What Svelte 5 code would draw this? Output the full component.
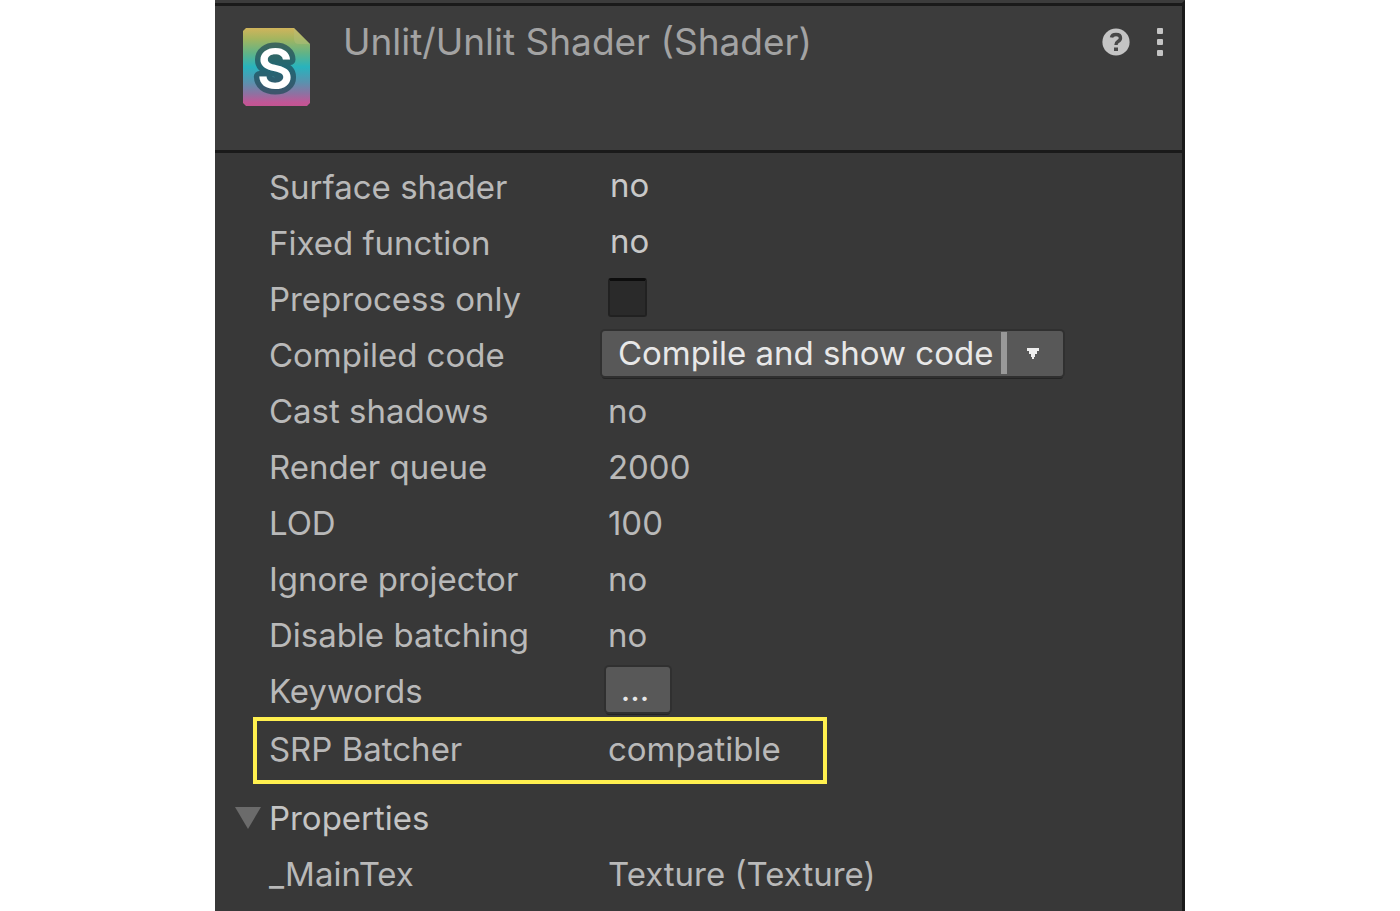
<script>
  let expanded = $state(true);
  let preprocessOnly = $state(false);

  const flags = [
    { label: 'Surface shader', value: 'no', field: true },
    { label: 'Fixed function', value: 'no', field: true },
    { label: 'Preprocess only', kind: 'toggle' },
    { label: 'Compiled code', kind: 'compile' },
    { label: 'Cast shadows', value: 'no' },
    { label: 'Render queue', value: '2000' },
    { label: 'LOD', value: '100' },
    { label: 'Ignore projector', value: 'no' },
    { label: 'Disable batching', value: 'no' },
    { label: 'Keywords', kind: 'keywords' }
  ];
</script>

<main class="inspector">
  <header>
    <svg class="asset" viewBox="0 0 67 78" aria-hidden="true">
      <defs>
        <linearGradient id="sheet" x1="0" y1="0" x2="0" y2="1">
          <stop offset="0" stop-color="#d0b45c" />
          <stop offset="0.14" stop-color="#a3b55f" />
          <stop offset="0.32" stop-color="#62b386" />
          <stop offset="0.5" stop-color="#28b3bd" />
          <stop offset="0.7" stop-color="#5b91ae" />
          <stop offset="0.84" stop-color="#8d72a2" />
          <stop offset="0.95" stop-color="#c05797" />
          <stop offset="1" stop-color="#c45491" />
        </linearGradient>
      </defs>
      <path d="M3 0H51L67 16V75L64 78H3L0 75V3Z" fill="url(#sheet)" />
      <path d="M51 0L67 16H56Q51 16 51 11Z" fill="#b9c17c" opacity="0.4" />
      <text class="letter" x="32" y="61" text-anchor="middle">S</text>
    </svg>
    <h1>Unlit/Unlit Shader (Shader)</h1>
    <button class="icon" aria-label="Help">
      <svg width="28" height="28" viewBox="0 0 28 28">
        <circle cx="14" cy="14" r="13.6" fill="#c4c4c4" />
        <path d="M9.5 9.5Q10 6.5 14 6.5Q18.5 6.5 18.5 10Q18.5 12 16 13.5Q14 14.7 14 17" fill="none" stroke="#484848" stroke-width="3.4" />
        <rect x="12" y="19.5" width="4" height="3.5" fill="#484848" />
      </svg>
    </button>
    <button class="icon" aria-label="More options">
      <svg width="12" height="28" viewBox="0 0 12 28" fill="#c4c4c4">
        <rect x="3" y="0" width="6" height="6" rx="1" />
        <rect x="3" y="11" width="6" height="6" rx="1" />
        <rect x="3" y="22" width="6" height="6" rx="1" />
      </svg>
    </button>
  </header>

  <section class="body">
    {#each flags as row}
      <div class="row">
        {#if row.kind === 'toggle'}
          <label for="preprocess">{row.label}</label>
          <input id="preprocess" type="checkbox" bind:checked={preprocessOnly} />
        {:else if row.kind === 'compile'}
          <span>{row.label}</span>
          <div class="split">
            <button class="action">Compile and show code</button>
            <button class="arrow" aria-label="Compile options">
              <svg width="12" height="11" viewBox="0 0 12 11"><path d="M0 0H12V3H10V6H8V9H7V11H5V9H4V6H2V3H0Z" fill="#eee" /></svg>
            </button>
          </div>
        {:else if row.kind === 'keywords'}
          <span>{row.label}</span>
          <button class="more">...</button>
        {:else}
          <span>{row.label}</span>
          <span class:field={row.field}>{row.value}</span>
        {/if}
      </div>
    {/each}

    <div class="row highlight">
      <span>SRP Batcher</span>
      <span>compatible</span>
    </div>

    <button class="foldout" aria-expanded={expanded} onclick={() => (expanded = !expanded)}>
      <svg class:closed={!expanded} width="26" height="22" viewBox="0 0 26 22"><path d="M0 0H26L13 22Z" fill="#6b6b6b" /></svg>
      <span>Properties</span>
    </button>
    {#if expanded}
      <div class="row">
        <span>_MainTex</span>
        <span>Texture (Texture)</span>
      </div>
    {/if}
  </section>
</main>

<style>
  :global(body) {
    margin: 0;
    background: #fff;
  }
  .inspector {
    box-sizing: border-box;
    width: 69.3%;
    min-height: 100vh;
    margin: 0 auto;
    background: #383838;
    border-right: 3px solid #1a1a1a;
    border-top: 3px solid #3c3c3c;
    color: #b9b9b9;
    font: 400 33px/40px Inter, sans-serif;
    white-space: nowrap;
  }
  button {
    padding: 0;
    border: 0;
    background: none;
    color: inherit;
    font: inherit;
    text-align: left;
  }
  svg {
    display: block;
  }
  header {
    display: flex;
    align-items: flex-start;
    box-sizing: border-box;
    height: 150px;
    padding: 22px 16px 0 28px;
    background: #3c3c3c;
    border: solid #1a1a1a;
    border-width: 3px 0;
  }
  .asset {
    width: 67px;
    height: 78px;
    margin-right: 33px;
  }
  .letter {
    font: 600 56px Inter, sans-serif;
    fill: #fff;
    stroke: rgba(32, 74, 88, 0.72);
    stroke-width: 11px;
    stroke-linejoin: round;
    paint-order: stroke;
  }
  h1 {
    flex: 1;
    margin: -6px 0 0;
    color: #a3a3a3;
    font: 400 37px/40px Inter, sans-serif;
  }
  .icon + .icon {
    margin-left: 24px;
  }
  .body {
    padding-top: 6px;
  }
  .row {
    display: grid;
    grid-template-columns: 339px 1fr;
    align-items: center;
    height: 56px;
    padding-left: 54px;
  }
  .field {
    padding: 0 0 4px 2px;
    color: #c8c8c8;
  }
  input {
    appearance: none;
    box-sizing: border-box;
    width: 39px;
    height: 39px;
    margin: 0 0 4px;
    background: #2a2a2a;
    border: 2px solid #212121;
    border-top: 3px solid #0d0d0d;
    border-radius: 3px;
  }
  input:checked {
    background: #c4c4c4;
  }
  .split,
  .more {
    height: 45px;
    margin: 0 0 4px -6px;
    background: #585858;
    border-radius: 3px;
    box-shadow: 0 0 0 2px #303030, 0 3px 0 #242424;
    color: #e8e8e8;
  }
  .split {
    display: flex;
    align-items: center;
    justify-self: start;
  }
  .action {
    height: 42px;
    padding: 0 8px 0 16px;
    border-right: 6px solid #999;
  }
  .arrow {
    display: flex;
    align-items: center;
    justify-content: center;
    box-sizing: border-box;
    width: 56px;
    height: 45px;
    padding-right: 4px;
  }
  .more {
    width: 64px;
    margin-left: -2px;
    padding-right: 6px;
    text-align: center;
  }
  .highlight {
    box-sizing: border-box;
    width: 574px;
    height: 67px;
    margin: -2px 0 6px 38px;
    padding: 0 0 4px 12px;
    border: 4px solid #fff04f;
  }
  .foldout {
    display: flex;
    align-items: center;
    gap: 8px;
    height: 56px;
    padding-left: 20px;
    color: #c4c4c4;
  }
  .closed {
    transform: rotate(-90deg);
  }
</style>
